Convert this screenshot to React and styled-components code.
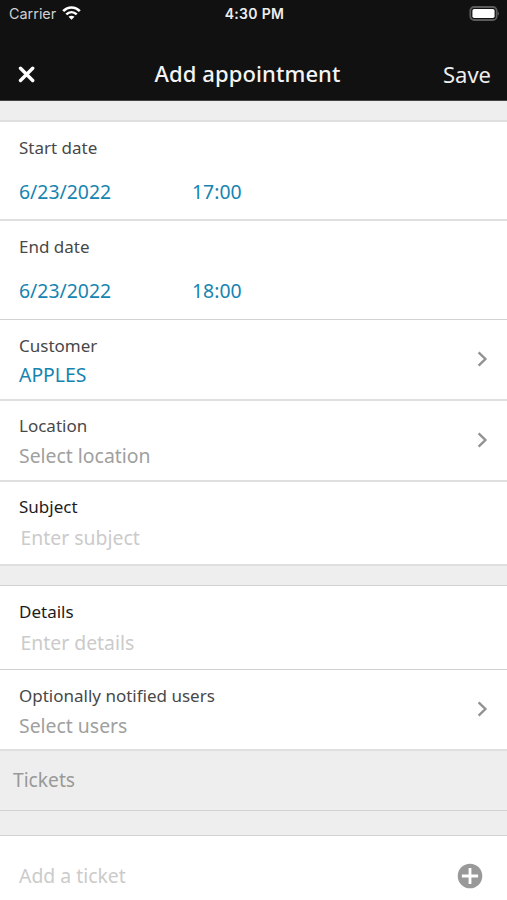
import React from 'react'
import styled, { createGlobalStyle } from 'styled-components'

const GlobalStyle = createGlobalStyle`
  * {
    box-sizing: border-box;
  }

  body {
    margin: 0;
    background: #fff;
    font-family: 'Noto Sans', 'Open Sans', sans-serif;
  }
`

const Screen = styled.div`
  width: 100%;
  height: 900px;
  display: flex;
  flex-direction: column;
  overflow: hidden;
  background: #fff;
`

const Header = styled.header`
  flex: none;
  height: 101px;
  background: #111;
  border-bottom: 1px solid #444;
  color: #f4f4f4;
`

const StatusBar = styled.div`
  height: 28px;
  display: grid;
  grid-template-columns: 1fr auto 1fr;
  align-items: center;
  padding: 0 7px 0 9px;
  font-family: Inter, sans-serif;
  font-size: 14px;
  line-height: 28px;

  svg {
    display: block;
  }
`

const Carrier = styled.div`
  display: flex;
  align-items: center;
  gap: 6px;
  color: #d0d0d0;
  font-size: 14.4px;

  svg {
    margin-top: -2px;
  }
`

const Clock = styled.div`
  color: #eee;
  font-weight: 600;
  font-size: 14px;
  letter-spacing: 0.3px;
`

const Battery = styled.div`
  justify-self: end;
  margin-top: -2px;
`

const NavBar = styled.div`
  height: 72px;
  padding: 10px 16px 0 18px;
  display: grid;
  grid-template-columns: 1fr auto 1fr;
  align-items: start;

  svg {
    display: block;
    margin-top: 28px;
  }
`

const Title = styled.h1`
  margin: 20px 0 0;
  padding-right: 14px;
  font-size: 22px;
  font-weight: 500;
  line-height: 30px;
  letter-spacing: 0.1px;
`

const SaveButton = styled.button`
  justify-self: end;
  margin: 21px 0 0;
  padding: 0;
  border: 0;
  background: none;
  color: #eee;
  font: inherit;
  font-size: 22px;
  line-height: 30px;
`

const Divider = styled.div`
  flex: none;
  height: ${({ $height }) => $height}px;
  background: #eee;
  border-bottom: ${({ $line }) => $line === 2 ? '2px solid #dfdfdf' : '1px solid #d2d2d2'};
`

const Row = styled.section`
  flex: none;
  height: ${({ $height }) => $height}px;
  padding: ${({ $top }) => $top || 14}px 18px 0 19px;
  display: flex;
  justify-content: space-between;
  border-bottom: ${({ $line }) => $line === 2 ? '2px solid #dfdfdf' : '1px solid #d2d2d2'};
`

const RowIcon = styled.div`
  align-self: flex-start;
  margin-top: ${({ $top }) => 31 - ($top || 14)}px;

  svg {
    display: block;
  }
`

const Field = styled.div`
  display: flex;
  flex-direction: column;
  gap: ${({ $gap }) => $gap}px;
`

const Label = styled.div`
  font-size: 17px;
  line-height: 24px;
  color: ${({ $strong }) => $strong ? '#1c1c1c' : '#484848'};
`

const tones = {
  link: '#1684b0',
  select: '#a0a0a0',
  input: '#cbcbcb'
}

const Value = styled.div`
  font-size: 19.4px;
  line-height: 24px;
  white-space: nowrap;
  color: ${({ $tone }) => tones[$tone]};
  padding-left: ${({ $inset }) => $inset ? 1.5 : 0}px;
`

const DateTime = styled.div`
  display: grid;
  grid-template-columns: 173px auto;
`

const SectionTitle = styled.div`
  flex: none;
  height: 60px;
  padding: 17px 13px 0;
  background: #eee;
  border-bottom: 1px solid #d2d2d2;
  color: #999;
  font-size: 19.2px;
  line-height: 24px;
`

const AddRow = styled.div`
  flex: 1;
  display: flex;
  align-items: center;
  justify-content: space-between;
  padding: 16px 24px 0 19px;

  svg {
    display: block;
  }
`

const WifiIcon = () => (
  <svg width='19' height='14' viewBox='0 0 19 14' fill='none' stroke='#fff' strokeWidth='2.6'>
    <path d='M1.2 5.2C6 .2 13 .2 17.8 5.2' />
    <path d='M4.3 8.4C7.4 5.5 11.6 5.5 14.7 8.4' />
    <path d='M9.5 13.8L6.5 10.8Q9.5 8.6 12.5 10.8Z' fill='#fff' stroke='none' />
  </svg>
)

const BatteryIcon = () => (
  <svg width='31' height='15' viewBox='0 0 31 15'>
    <rect x='1.3' y='1' width='26.4' height='13' rx='3.8' fill='none' stroke='#5c5c5c' strokeWidth='1.8' />
    <rect x='3.4' y='3' width='22.2' height='9' rx='1.8' fill='#fff' />
    <path d='M28.8 5.2Q31.2 7.5 28.8 9.8Z' fill='#5c5c5c' />
  </svg>
)

const CloseIcon = () => (
  <svg width='17' height='17' viewBox='0 0 17 17' stroke='#fff' strokeWidth='3.4' strokeLinecap='round'>
    <path d='M2.5 2.3L14.7 14.5M14.7 2.3L2.5 14.5' />
  </svg>
)

const Chevron = () => (
  <svg width='14' height='16' viewBox='0 0 14 16' fill='none' stroke='#929292' strokeWidth='2.4'>
    <path d='M3.6 1.4L10.4 8L3.6 14.6' />
  </svg>
)

const PlusIcon = () => (
  <svg width='26' height='26' viewBox='0 0 26 26'>
    <circle cx='13' cy='13' r='12.3' fill='#999' />
    <path d='M13 4.9V21.1M4.9 13H21.1' stroke='#fff' strokeWidth='2.8' />
  </svg>
)

const DateRow = ({ label, date, time, line }) => (
  <Row $height={99} $line={line}>
    <Field $gap={20}>
      <Label>{label}</Label>
      <DateTime>
        <Value $tone='link'>{date}</Value>
        <Value $tone='link'>{time}</Value>
      </DateTime>
    </Field>
  </Row>
)

const SelectRow = ({ label, value, tone = 'select', top, gap = 6 }) => (
  <Row $height={81} $line={2} $top={top}>
    <Field $gap={gap}>
      <Label>{label}</Label>
      <Value $tone={tone}>{value}</Value>
    </Field>
    <RowIcon $top={top}>
      <Chevron />
    </RowIcon>
  </Row>
)

const InputRow = ({ label, placeholder, line, top }) => (
  <Row $height={84} $line={line} $top={top}>
    <Field $gap={7}>
      <Label $strong>{label}</Label>
      <Value $tone='input' $inset>{placeholder}</Value>
    </Field>
  </Row>
)

const App = () => {
  return (
    <Screen>
      <GlobalStyle />
      <Header>
        <StatusBar>
          <Carrier>
            Carrier
            <WifiIcon />
          </Carrier>
          <Clock>4:30 PM</Clock>
          <Battery>
            <BatteryIcon />
          </Battery>
        </StatusBar>
        <NavBar>
          <CloseIcon />
          <Title>Add appointment</Title>
          <SaveButton>Save</SaveButton>
        </NavBar>
      </Header>

      <Divider $height={21} $line={2} />
      <DateRow label='Start date' date='6/23/2022' time='17:00' line={2} />
      <DateRow label='End date' date='6/23/2022' time='18:00' line={1} />
      <SelectRow label='Customer' value='APPLES' tone='link' gap={5} />
      <SelectRow label='Location' value='Select location' top={13} />
      <InputRow label='Subject' placeholder='Enter subject' line={2} top={13} />

      <Divider $height={20} $line={1} />
      <InputRow label='Details' placeholder='Enter details' line={1} />
      <SelectRow label='Optionally notified users' value='Select users' />
      <SectionTitle>Tickets</SectionTitle>
      <Divider $height={25} $line={1} />
      <AddRow>
        <Value $tone='input'>Add a ticket</Value>
        <PlusIcon />
      </AddRow>
    </Screen>
  )
}

export default App
